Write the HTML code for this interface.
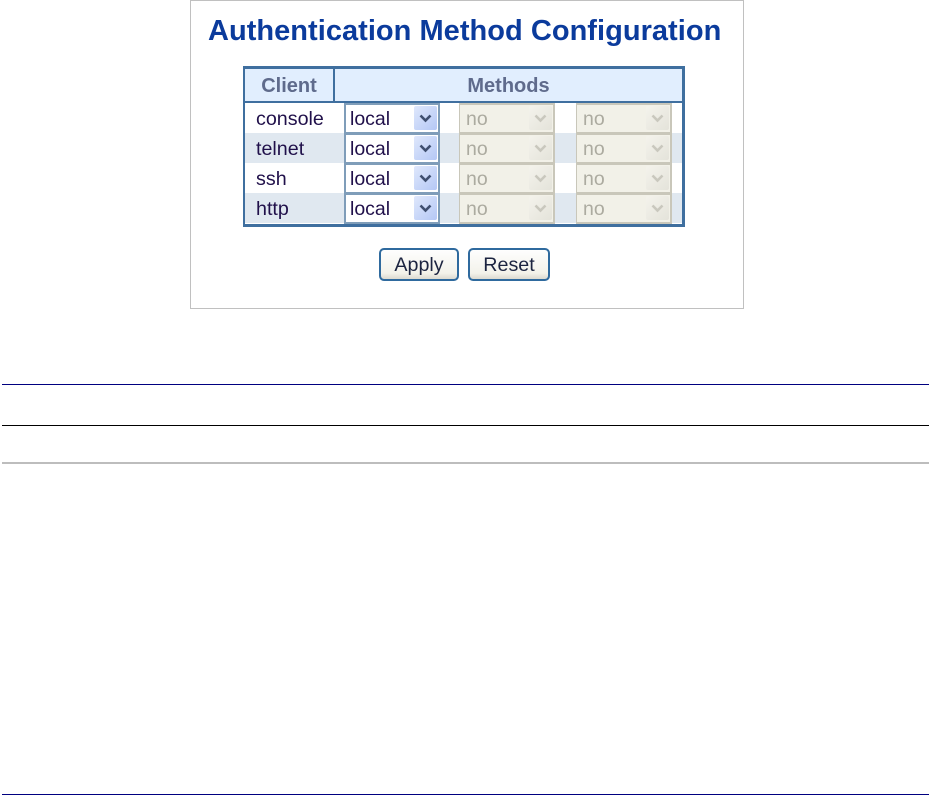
<!DOCTYPE html>
<html>
<head>
<meta charset="utf-8">
<style>
html,body{margin:0;padding:0;background:#fff;}
body{position:relative;width:929px;height:795px;overflow:hidden;font-family:"Liberation Sans",sans-serif;}
div{position:absolute;box-sizing:border-box;}
.hl{left:2px;width:927px;height:1px;}
.panel{left:190px;top:0;width:554px;height:309px;border:1px solid #c0c0c0;}
.title{left:208px;top:14px;width:530px;font-size:29px;line-height:34px;font-weight:bold;color:#0b3b9c;white-space:nowrap;letter-spacing:.03px;}
.tbl{left:243px;top:66px;width:442px;height:161px;border:3px solid #3f6f9f;border-left-width:2px;}
.hd{top:69px;height:33px;background:#e1eefe;color:#5f6b8c;font-weight:bold;font-size:20px;line-height:34px;text-align:center;}
.hb{left:245px;top:101px;width:437px;height:2px;background:#3f6f9f;}
.vd{left:333px;top:69px;width:2px;height:33px;background:#3f6f9f;}
.stripe{left:245px;width:437px;height:30px;background:#e0e8f0;}
.lab{left:256px;font-size:19.700px;line-height:30px;color:#20104a;white-space:nowrap;}
.sel{width:96px;height:31px;border:2px solid #7f9db9;background:#fff;font-size:19.500px;line-height:29px;padding-left:4px;color:#20104a;}
.sel.d{border-color:#c9c7ba;border-left-width:1px;border-right-width:2px;padding-left:6px;background:#f2f1e8;color:#acaba0;}
.ar{top:1px;right:1px;width:23px;height:24px;background:linear-gradient(135deg,#dfe8fc,#b4c7f5);border-radius:2px;}
.d .ar{background:linear-gradient(135deg,#f4f3ec,#e4e3da);}
svg{position:absolute;left:5px;top:8px;}
.btn{top:248px;height:33px;border:2px solid #2f6a9e;border-radius:5px;background:linear-gradient(#fefefe,#f3f2ea 80%,#dcdad0);font-size:19.700px;line-height:31px;text-align:center;color:#1c2440;}
</style>
</head>
<body>
<div class="panel"></div>
<div class="title">Authentication Method Configuration</div>
<div class="tbl"></div>
<div class="hd" style="left:245px;width:88px;">Client</div>
<div class="hd" style="left:335px;width:347px;">Methods</div>
<div class="vd"></div>
<div class="hb"></div>
<div class="stripe" style="top:133px;"></div>
<div class="stripe" style="top:193px;height:30px;"></div>

<div class="lab" style="top:104px;">console</div>
<div class="lab" style="top:134px;">telnet</div>
<div class="lab" style="top:164px;">ssh</div>
<div class="lab" style="top:194px;">http</div>

<div class="sel" style="left:344px;top:103px;">local<div class="ar"><svg width="13" height="9" viewBox="0 0 13 9"><path d="M1.500 1.500L6.500 6.500L11.500 1.500" fill="none" stroke="#3f4f70" stroke-width="2.600"/></svg></div></div>
<div class="sel" style="left:344px;top:133px;">local<div class="ar"><svg width="13" height="9" viewBox="0 0 13 9"><path d="M1.500 1.500L6.500 6.500L11.500 1.500" fill="none" stroke="#3f4f70" stroke-width="2.600"/></svg></div></div>
<div class="sel" style="left:344px;top:163px;">local<div class="ar"><svg width="13" height="9" viewBox="0 0 13 9"><path d="M1.500 1.500L6.500 6.500L11.500 1.500" fill="none" stroke="#3f4f70" stroke-width="2.600"/></svg></div></div>
<div class="sel" style="left:344px;top:193px;">local<div class="ar"><svg width="13" height="9" viewBox="0 0 13 9"><path d="M1.500 1.500L6.500 6.500L11.500 1.500" fill="none" stroke="#3f4f70" stroke-width="2.600"/></svg></div></div>

<div class="sel d" style="left:459px;top:103px;">no<div class="ar"><svg width="13" height="9" viewBox="0 0 13 9"><path d="M1.500 1.500L6.500 6.500L11.500 1.500" fill="none" stroke="#c9c8be" stroke-width="2.600"/></svg></div></div>
<div class="sel d" style="left:459px;top:133px;">no<div class="ar"><svg width="13" height="9" viewBox="0 0 13 9"><path d="M1.500 1.500L6.500 6.500L11.500 1.500" fill="none" stroke="#c9c8be" stroke-width="2.600"/></svg></div></div>
<div class="sel d" style="left:459px;top:163px;">no<div class="ar"><svg width="13" height="9" viewBox="0 0 13 9"><path d="M1.500 1.500L6.500 6.500L11.500 1.500" fill="none" stroke="#c9c8be" stroke-width="2.600"/></svg></div></div>
<div class="sel d" style="left:459px;top:193px;">no<div class="ar"><svg width="13" height="9" viewBox="0 0 13 9"><path d="M1.500 1.500L6.500 6.500L11.500 1.500" fill="none" stroke="#c9c8be" stroke-width="2.600"/></svg></div></div>

<div class="sel d" style="left:576px;top:103px;">no<div class="ar"><svg width="13" height="9" viewBox="0 0 13 9"><path d="M1.500 1.500L6.500 6.500L11.500 1.500" fill="none" stroke="#c9c8be" stroke-width="2.600"/></svg></div></div>
<div class="sel d" style="left:576px;top:133px;">no<div class="ar"><svg width="13" height="9" viewBox="0 0 13 9"><path d="M1.500 1.500L6.500 6.500L11.500 1.500" fill="none" stroke="#c9c8be" stroke-width="2.600"/></svg></div></div>
<div class="sel d" style="left:576px;top:163px;">no<div class="ar"><svg width="13" height="9" viewBox="0 0 13 9"><path d="M1.500 1.500L6.500 6.500L11.500 1.500" fill="none" stroke="#c9c8be" stroke-width="2.600"/></svg></div></div>
<div class="sel d" style="left:576px;top:193px;">no<div class="ar"><svg width="13" height="9" viewBox="0 0 13 9"><path d="M1.500 1.500L6.500 6.500L11.500 1.500" fill="none" stroke="#c9c8be" stroke-width="2.600"/></svg></div></div>

<div class="btn" style="left:379px;width:80px;">Apply</div>
<div class="btn" style="left:468px;width:82px;">Reset</div>

<div class="hl" style="top:384px;background:#000080;"></div>
<div class="hl" style="top:425px;background:#000;"></div>
<div class="hl" style="top:462px;background:#bdbdbd;height:2px;"></div>
<div class="hl" style="top:794px;background:#000080;"></div>
</body>
</html>
